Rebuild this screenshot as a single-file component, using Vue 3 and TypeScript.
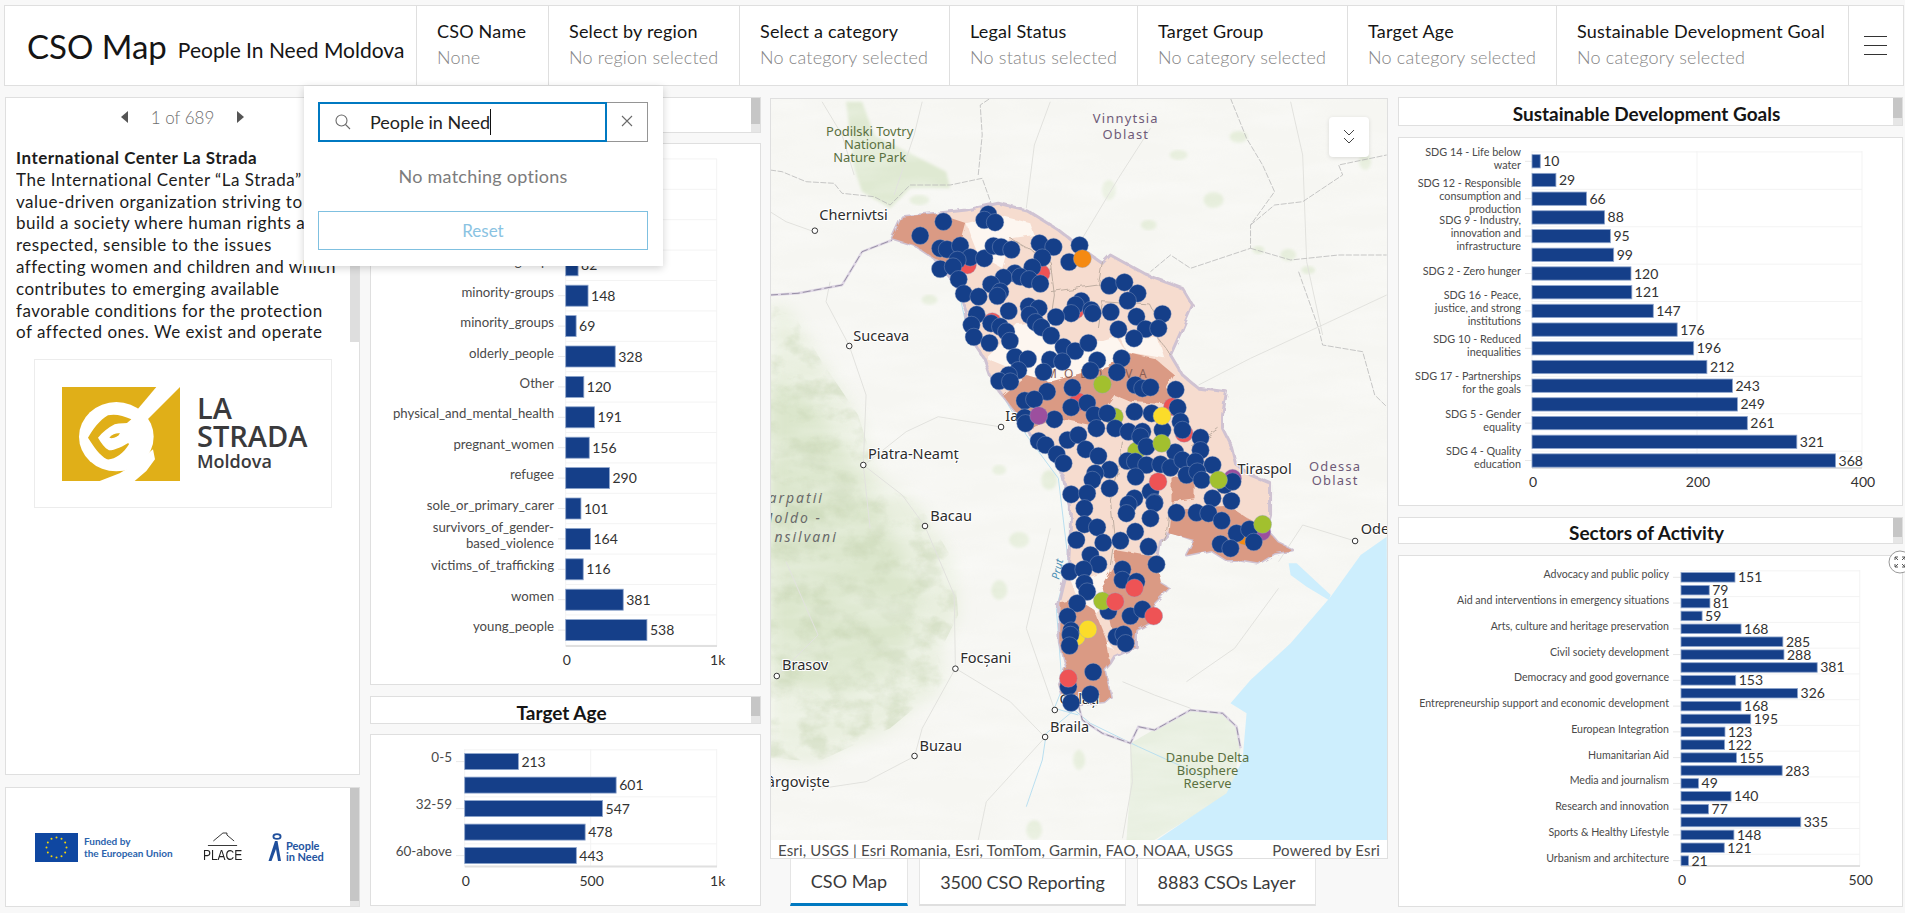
<template>
  <div class="page">
    <header class="topbar">
      <div class="brand">
        <span class="brand-title">CSO Map</span>
        <span class="brand-sub">People In Need Moldova</span>
      </div>
      <div v-for="f in filters" :key="f.label" class="filter" :style="{ width: f.width + 'px' }">
        <div class="filter-label">{{ f.label }}</div>
        <div class="filter-value">{{ f.value }}</div>
      </div>
      <button class="menu-btn" aria-label="Menu"><i></i><i></i><i></i></button>
    </header>

    <div class="dropdown">
      <div class="search-row">
        <div class="search-box">
          <svg class="search-icon" width="18" height="18" viewBox="0 0 18 18" fill="none" stroke="#6a6a6a" stroke-width="1.1">
            <circle cx="7.5" cy="7.5" r="5.5" />
            <path d="M11.5 11.5 L16 16" />
          </svg>
          <span class="search-text">People in Need</span>
          <span class="caret"></span>
        </div>
        <button class="clear-btn" aria-label="Clear">
          <svg width="12" height="12" viewBox="0 0 12 12" stroke="#6a6a6a" stroke-width="1.1"><path d="M1 1 L11 11 M11 1 L1 11" /></svg>
        </button>
      </div>
      <div class="no-match">No matching options</div>
      <button class="reset-btn">Reset</button>
    </div>

    <main class="layout">
      <section class="col col-info">
        <div class="card info-card">
          <div class="pager">
            <svg width="9" height="14" viewBox="0 0 9 14"><path d="M8 1 V13 L1 7 Z" fill="#555" /></svg>
            <span>1 of 689</span>
            <svg width="9" height="14" viewBox="0 0 9 14"><path d="M1 1 V13 L8 7 Z" fill="#555" /></svg>
          </div>
          <div class="info-text">
            <strong>International Center La Strada</strong>
            <span v-for="line in infoLines" :key="line" class="info-line">{{ line }}</span>
          </div>
          <span class="track track-info"></span>
          <div class="logo-box">
            <svg class="strada-mark" width="118" height="94" viewBox="127 113 354 282">
              <rect x="127" y="113" width="354" height="282" fill="#e0af18" />
              <path d="M410 113 H481 L382 212 L350 184 Z" fill="#fff" />
              <ellipse cx="290" cy="262" rx="112" ry="104" fill="#fff" />
              <path d="M240 395 L300 372 L345 345 L400 300 L406 330 L380 365 L345 395 Z" fill="#fff" />
              <path d="M335 210 C310 198 285 193 265 198 C240 212 220 240 205 265 C222 292 240 318 262 330 C285 332 312 312 328 285 L300 240 Z" fill="#e0af18" />
              <path d="M340 220 C320 222 300 220 285 225 C265 235 248 250 235 265 C245 282 255 296 268 303 C285 303 310 292 335 275 L362 240 Z" fill="#fff" />
              <path d="M270 264 C278 254 292 250 301 252 C296 263 282 268 270 266 Z" fill="#e0af18" />
            </svg>
            <div class="strada-name">
              <span class="n-la">LA</span>
              <span class="n-strada">STRADA</span>
              <span class="n-moldova">Moldova</span>
            </div>
          </div>
        </div>
        <div class="card footer-card">
          <svg class="eu-flag" width="43" height="29" viewBox="0 0 43 29">
            <rect width="43" height="29" fill="#0f47a1" />
            <circle v-for="(s, i) in euStars" :key="i" :cx="s.x" :cy="s.y" r="1" fill="#f5d50a" />
          </svg>
          <div class="eu-text">Funded by<br />the European Union</div>
          <div class="place">
            <svg width="37" height="15" viewBox="0 0 37 15" fill="none" stroke="#222" stroke-width="1">
              <path d="M7 9 L19 1 H24 L24 3 L33 9" />
              <path d="M0 13.5 H37" />
            </svg>
            <span>PLACE</span>
          </div>
          <div class="pin">
            <svg width="14" height="29" viewBox="0 0 14 29">
              <ellipse cx="9" cy="3.5" rx="3.6" ry="2.4" fill="none" stroke="#1f4f9c" stroke-width="1.8" />
              <path d="M7 8 L9.5 8 L13 28 L10 28 L8 16 L3.5 28 L0.5 28 Z" fill="#1f4f9c" />
            </svg>
            <span>People<br />in Need</span>
          </div>
          <span class="track track-footer"></span>
        </div>
      </section>

      <section v-for="col in chartColumns" :key="col.cls" :class="['col', col.cls]">
        <template v-for="chart in col.charts" :key="chart.title">
          <div class="panel-head" :style="{ height: chart.headH + 'px', marginBottom: chart.gap + 'px' }">
            <h3 :style="{ lineHeight: chart.headH + 3 + 'px' }">{{ chart.title }}</h3>
            <span class="thumb"></span>
          </div>
          <div class="card chart-card" :style="{ height: chart.h + 'px', marginBottom: '11px' }">
            <svg class="chart" :viewBox="`${chart.x + 1} ${chart.y + 1} ${chart.w - 2} ${chart.h - 2}`">
              <line
                v-for="y in gridYs(chart)"
                :key="y"
                :x1="chart.x0"
                :x2="chart.plotRight"
                :y1="y"
                :y2="y"
                class="grid"
              />
              <line
                v-for="t in chart.ticks"
                :key="'v' + t.v"
                :x1="chart.x0 + t.v * chart.unit"
                :x2="chart.x0 + t.v * chart.unit"
                :y1="chart.plotTop"
                :y2="chart.axisY"
                class="grid"
              />
              <line :x1="chart.x0" :x2="chart.plotRight" :y1="chart.axisY" :y2="chart.axisY" class="axis" />
              <template v-for="(r, i) in chart.rows" :key="i">
                <template v-if="r.label">
                  <line :x1="chart.labelRight + 4" :x2="chart.x0" :y1="rowY(chart, i)" :y2="rowY(chart, i)" class="axis-tick" />
                  <text class="cat" :style="{ fontSize: chart.labelSize + 'px' }" text-anchor="end">
                    <tspan
                      v-for="(line, n) in r.label"
                      :key="n"
                      :x="chart.labelRight"
                      :y="rowY(chart, i) - chart.labelUp - ((r.label.length - 1) * chart.lineH) / 2 + n * chart.lineH + 4"
                    >{{ line }}</tspan>
                  </text>
                </template>
                <template v-if="r.value">
                  <rect
                    class="bar"
                    :x="chart.x0"
                    :y="rowY(chart, i) - chart.barH / 2"
                    :width="r.value * chart.unit"
                    :height="chart.barH"
                  />
                  <text class="val" :x="chart.x0 + r.value * chart.unit + 3" :y="rowY(chart, i) + 5">{{ r.value }}</text>
                </template>
              </template>
              <text
                v-for="t in chart.ticks"
                :key="'t' + t.v"
                class="val"
                text-anchor="middle"
                :x="chart.x0 + t.v * chart.unit + 1"
                :y="chart.axisY + 19"
              >{{ t.text }}</text>
            </svg>
            <svg v-if="chart.expand" class="expand" width="24" height="24" viewBox="0 0 24 24" fill="none" stroke="#555" stroke-width="1">
              <circle cx="12" cy="12" r="11" fill="#fff" stroke="#999" />
              <path d="M7 7 L10 10 M7 7 H10 M7 7 V10 M7 17 L10 14 M7 17 H10 M7 17 V14 M17 7 L14 10 M17 7 H14 M17 7 V10 M17 17 L14 14 M17 17 H14 M17 17 V14" />
            </svg>
          </div>
        </template>
      </section>

      <section class="col col-map">
        <div class="map-frame">
          <svg class="map" viewBox="771 99 618 741" preserveAspectRatio="none">
            <defs>
              <filter id="soft" x="-10%" y="-10%" width="120%" height="120%"><feGaussianBlur stdDeviation="8" /></filter>
              <filter id="softer" x="-10%" y="-10%" width="120%" height="120%"><feGaussianBlur stdDeviation="1.5" /></filter>
              <filter id="rough" x="-5%" y="-5%" width="110%" height="110%">
                <feTurbulence type="fractalNoise" baseFrequency="0.09" numOctaves="2" seed="4" />
                <feDisplacementMap in="SourceGraphic" scale="6" />
              </filter>
              <filter id="hills" x="0" y="0" width="100%" height="100%">
                <feTurbulence type="fractalNoise" baseFrequency="0.012 0.05" numOctaves="3" seed="9" />
                <feColorMatrix values="0 0 0 0 1  0 0 0 0 1  0 0 0 0 1  1.6 0 0 0 -0.55" />
              </filter>
              <filter id="ridge" x="0" y="0" width="100%" height="100%">
                <feTurbulence type="fractalNoise" baseFrequency="0.035 0.05" numOctaves="4" seed="3" />
                <feColorMatrix values="0 0 0 0 0.56  0 0 0 0 0.65  0 0 0 0 0.44  3.2 0 0 0 -1.4" />
              </filter>
              <clipPath id="mountains"><polygon :points="pts(mountainArea)" /></clipPath>
            </defs>

            <rect x="771" y="99" width="618" height="741" fill="#f6f6f2" />
            <polygon :points="pts(mountainArea)" fill="#e9efdf" filter="url(#soft)" />
            <polygon :points="pts(forestCore)" fill="#dbe6cc" filter="url(#soft)" />
            <g clip-path="url(#mountains)"><rect x="771" y="99" width="618" height="741" filter="url(#ridge)" opacity="0.5" /></g>
            <polygon :points="pts(tovtry)" fill="#dfe9d2" filter="url(#softer)" />
            <ellipse v-for="(g, i) in patches" :key="'p' + i" :cx="g[0]" :cy="g[1]" :rx="g[2]" :ry="g[3]" fill="#e5edda" filter="url(#softer)" />
            <polygon :points="pts(delta)" fill="#e8efe0" />
            <rect x="771" y="99" width="618" height="741" filter="url(#hills)" opacity="0.35" />
            <polygon :points="pts(sea)" fill="#cdeefd" />
            <polygon :points="pts(liman)" fill="#cdeefd" />
            <polyline v-for="(l, i) in roads" :key="'r' + i" :points="pts(l)" class="road" />
            <polyline :points="pts(prut)" class="river" />
            <polyline :points="pts(danube)" class="river" />
            <polyline v-for="(l, i) in oblasts" :key="'o' + i" :points="pts(l)" class="oblast" />
            <polyline v-for="(l, i) in borders" :key="'b' + i" :points="pts(l)" class="border-halo" />
            <polyline v-for="(l, i) in borders" :key="'bd' + i" :points="pts(l)" class="border-dash" />

            <g filter="url(#rough)">
              <polygon :points="pts(moldova)" fill="#f6dccf" stroke="#cfc2d2" stroke-width="3" stroke-linejoin="round" />
              <polygon v-for="(p, i) in paleRegions" :key="'pa' + i" :points="pts(p)" fill="#fdf6f0" />
              <polygon v-for="(p, i) in darkRegions" :key="'da' + i" :points="pts(p)" fill="#da9a84" />
              <polyline v-for="(l, i) in regionLines" :key="'li' + i" :points="pts(l)" class="region-line" />
            </g>

            <g class="city-dots">
              <circle v-for="c in cityDots" :key="'d' + c.name" :cx="c.dx" :cy="c.dy" r="2.8" />
            </g>
            <text v-for="c in cities" :key="c.name" class="city" :x="c.x" :y="c.y" :text-anchor="c.anchor || 'start'">{{ c.name }}</text>
            <text class="country" x="1047" y="378">MOLDOVA</text>
            <text class="river-name" transform="translate(1060 580) rotate(-78)">Prut</text>
            <text class="oblast-name" text-anchor="middle"><tspan x="1127" y="123">Vinnytsia</tspan><tspan x="1127" y="139">Oblast</tspan></text>
            <text class="oblast-name" text-anchor="middle"><tspan x="1337" y="471">Odessa</tspan><tspan x="1337" y="485">Oblast</tspan></text>
            <text class="park" text-anchor="middle"><tspan x="870" y="136">Podilski Tovtry</tspan><tspan x="870" y="149">National</tspan><tspan x="870" y="162">Nature Park</tspan></text>
            <text class="park" text-anchor="middle"><tspan x="1209" y="762">Danube Delta</tspan><tspan x="1209" y="775">Biosphere</tspan><tspan x="1209" y="788">Reserve</tspan></text>
            <text class="range" text-anchor="end"><tspan x="824" y="503">arpatii</tspan><tspan x="822" y="523">Moldo -</tspan><tspan x="838" y="542">nsilvani</tspan></text>

            <circle v-for="(d, i) in underDots" :key="'u' + i" :cx="d.x" :cy="d.y" r="9" :fill="d.c" class="dot" />
            <circle v-for="(d, i) in navyDots" :key="'n' + i" :cx="d.x" :cy="d.y" r="8.8" fill="#153f89" class="dot" />
            <circle v-for="(d, i) in topDots" :key="'t' + i" :cx="d.x" :cy="d.y" r="9" :fill="d.c" class="dot" />
          </svg>
          <button class="collapse-btn" aria-label="Collapse">
            <svg width="12" height="16" viewBox="0 0 12 16" fill="none" stroke="#444" stroke-width="1"><path d="M1 1 L6 6 L11 1 M1 9 L6 14 L11 9" /></svg>
          </button>
          <div class="attribution">
            <span>Esri, USGS | Esri Romania, Esri, TomTom, Garmin, FAO, NOAA, USGS</span>
            <span>Powered by Esri</span>
          </div>
        </div>
        <nav class="tabs">
          <a class="tab active">CSO Map</a>
          <a class="tab">3500 CSO Reporting</a>
          <a class="tab">8883 CSOs Layer</a>
        </nav>
      </section>
    </main>
  </div>
</template>

<script setup lang="ts">
type Pt = number[]

interface Row {
  label?: string[]
  value: number
}

interface Chart {
  title: string
  headH: number
  gap: number
  x: number
  y: number
  w: number
  h: number
  x0: number
  unit: number
  firstY: number
  step: number
  barH: number
  axisY: number
  plotTop: number
  plotRight: number
  labelRight: number
  labelSize: number
  labelUp: number
  lineH: number
  gridEvery: number
  ticks: { v: number; text: string }[]
  rows: Row[]
  expand?: boolean
}

const filters = [
  { label: 'CSO Name', value: 'None', width: 132 },
  { label: 'Select by region', value: 'No region selected', width: 191 },
  { label: 'Select a category', value: 'No category selected', width: 210 },
  { label: 'Legal Status', value: 'No status selected', width: 188 },
  { label: 'Target Group', value: 'No category selected', width: 210 },
  { label: 'Target Age', value: 'No category selected', width: 209 },
  { label: 'Sustainable Development Goal', value: 'No category selected', width: 292 }
]

const infoLines = [
  'The International Center “La Strada” is a',
  'value-driven organization striving to',
  'build a society where human rights are',
  'respected, sensible to the issues',
  'affecting women and children and which',
  'contributes to emerging available',
  'favorable conditions for the protection',
  'of affected ones. We exist and operate'
]

const euStars = Array.from({ length: 12 }, (_, i) => ({
  x: 21.5 + 10 * Math.sin((i * Math.PI) / 6),
  y: 14.5 - 10 * Math.cos((i * Math.PI) / 6)
}))

const num = (values: number[]): Row[] => values.map((value) => ({ value }))

const sdgRows: Row[] = num([10, 29, 66, 88, 95, 99, 120, 121, 147, 176, 196, 212, 243, 249, 261, 321, 368])
const sdgLabels: Record<number, string[]> = {
  0: ['SDG 14 - Life below', 'water'],
  2: ['SDG 12 - Responsible', 'consumption and', 'production'],
  4: ['SDG 9 - Industry,', 'innovation and', 'infrastructure'],
  6: ['SDG 2 - Zero hunger'],
  8: ['SDG 16 - Peace,', 'justice, and strong', 'institutions'],
  10: ['SDG 10 - Reduced', 'inequalities'],
  12: ['SDG 17 - Partnerships', 'for the goals'],
  14: ['SDG 5 - Gender', 'equality'],
  16: ['SDG 4 - Quality', 'education']
}
sdgRows.forEach((r, i) => (r.label = sdgLabels[i]))

const sectorRows: Row[] = num([151, 79, 81, 59, 168, 285, 288, 381, 153, 326, 168, 195, 123, 122, 155, 283, 49, 140, 77, 335, 148, 121, 21])
;[
  'Advocacy and public policy',
  'Aid and interventions in emergency situations',
  'Arts, culture and heritage preservation',
  'Civil society development',
  'Democracy and good governance',
  'Entrepreneurship support and economic development',
  'European Integration',
  'Humanitarian Aid',
  'Media and journalism',
  'Research and innovation',
  'Sports & Healthy Lifestyle',
  'Urbanism and architecture'
].forEach((t, i) => (sectorRows[i * 2].label = [t]))

const groupChart: Chart = {
  title: 'Target Group', headH: 36, gap: 10, x: 370, y: 143, w: 391, h: 542,
  x0: 565.7, unit: 0.151, firstY: 174.1, step: 30.4, barH: 21, axisY: 646, plotTop: 159, plotRight: 717,
  labelRight: 554, labelSize: 13.2, labelUp: 3, lineH: 15.5, gridEvery: 1,
  ticks: [{ v: 0, text: '0' }, { v: 1000, text: '1k' }],
  rows: [
    { value: 0 }, { value: 0 }, { value: 0 },
    { label: ['ethnic-groups'], value: 82 },
    { label: ['minority-groups'], value: 148 },
    { label: ['minority_groups'], value: 69 },
    { label: ['olderly_people'], value: 328 },
    { label: ['Other'], value: 120 },
    { label: ['physical_and_mental_health'], value: 191 },
    { label: ['pregnant_women'], value: 156 },
    { label: ['refugee'], value: 290 },
    { label: ['sole_or_primary_carer'], value: 101 },
    { label: ['survivors_of_gender-', 'based_violence'], value: 164 },
    { label: ['victims_of_trafficking'], value: 116 },
    { label: ['women'], value: 381 },
    { label: ['young_people'], value: 538 }
  ]
}

const ageChart: Chart = {
  title: 'Target Age', headH: 28, gap: 10, x: 370, y: 734, w: 391, h: 172,
  x0: 464.7, unit: 0.252, firstY: 761.6, step: 23.5, barH: 16, axisY: 866.5, plotTop: 749, plotRight: 717,
  labelRight: 452, labelSize: 13.5, labelUp: 4, lineH: 15, gridEvery: 2,
  ticks: [{ v: 0, text: '0' }, { v: 500, text: '500' }, { v: 1000, text: '1k' }],
  rows: [
    { label: ['0-5'], value: 213 },
    { value: 601 },
    { label: ['32-59'], value: 547 },
    { value: 478 },
    { label: ['60-above'], value: 443 }
  ]
}

const sdgChart: Chart = {
  title: 'Sustainable Development Goals', headH: 29, gap: 11, x: 1399, y: 137, w: 505, h: 369,
  x0: 1533, unit: 0.825, firstY: 161.3, step: 18.7, barH: 13.3, axisY: 468, plotTop: 151, plotRight: 1863,
  labelRight: 1522, labelSize: 10.8, labelUp: 3, lineH: 13, gridEvery: 2,
  ticks: [{ v: 0, text: '0' }, { v: 200, text: '200' }, { v: 400, text: '400' }],
  rows: sdgRows
}

const sectorChart: Chart = {
  title: 'Sectors of Activity', headH: 27, gap: 11, x: 1399, y: 555, w: 505, h: 352,
  x0: 1682, unit: 0.3575, firstY: 577.3, step: 12.88, barH: 9.5, axisY: 866, plotTop: 570, plotRight: 1861,
  labelRight: 1670, labelSize: 10.6, labelUp: 3, lineH: 13, gridEvery: 2,
  ticks: [{ v: 0, text: '0' }, { v: 500, text: '500' }],
  rows: sectorRows,
  expand: true
}

const chartColumns = [
  { cls: 'col-mid', charts: [groupChart, ageChart] },
  { cls: 'col-right', charts: [sdgChart, sectorChart] }
]

const rowY = (c: Chart, i: number) => c.firstY + i * c.step

const gridYs = (c: Chart) => {
  const out: number[] = []
  for (let i = 0; i <= c.rows.length; i += c.gridEvery) {
    out.push(rowY(c, i) - c.step / 2)
  }
  return out
}

// Map shapes are traced in the crop coordinates of the map and then converted
const toPage = ([x, y]: Pt) => [770 + x / 2.489, 95 + y / 3]
const pts = (list: Pt[]) =>
  list
    .map((p) => {
      const [x, y] = toPage(p)
      return `${x.toFixed(1)},${y.toFixed(1)}`
    })
    .join(' ')
// second crop starts 405px lower
const low = (list: Pt[]): Pt[] => list.map(([x, y]) => [x, y + 1215])

const moldova: Pt[] = [
  [305, 430], [330, 365], [415, 355], [490, 345], [570, 325], [640, 345], [720, 405], [790, 470], [830, 505], [850, 480],
  [940, 540], [1030, 580], [1055, 630], [1030, 700], [1000, 780], [1030, 840], [1070, 880], [1140, 890], [1130, 960],
  [1130, 1000], [1155, 1060], [1165, 1110], [1200, 1140], [1250, 1165], [1250, 1260],
  ...low([
    [1240, 90], [1270, 130], [1305, 150], [1260, 160], [1220, 190], [1170, 180], [1140, 180], [1100, 150], [1040, 165],
    [1060, 120], [1000, 95], [975, 125], [960, 240], [995, 265], [950, 320], [975, 350], [915, 390], [915, 440], [860, 470],
    [850, 490], [835, 510], [850, 590], [835, 605], [770, 615], [730, 590], [720, 550], [740, 500], [725, 430], [720, 320],
    [745, 200], [750, 100], [750, 20]
  ]),
  [730, 1140], [700, 1060], [650, 1020], [620, 960], [580, 900], [555, 860], [535, 790], [495, 720], [490, 650], [465, 570],
  [410, 490], [360, 450]
]

const darkRegions: Pt[][] = [
  [[305, 430], [330, 365], [415, 355], [490, 385], [480, 430], [500, 500], [480, 525], [410, 490], [360, 450]],
  [[580, 900], [640, 840], [700, 860], [880, 800], [890, 770], [960, 790], [1010, 840], [990, 880], [1010, 930], [900, 920], [860, 900], [830, 950], [800, 990], [720, 970], [650, 1000], [620, 960]],
  [[1000, 1140], [1060, 1160], [1060, 1210], [1000, 1220]],
  low([[1000, 30], [1150, 20], [1200, 60], [1240, 90], [1270, 130], [1305, 150], [1260, 160], [1220, 190], [1170, 180], [1140, 180], [1100, 150], [1040, 165], [1060, 120], [995, 100]]),
  low([[860, 150], [960, 170], [975, 250], [995, 265], [950, 320], [975, 350], [915, 390], [910, 440], [860, 430], [830, 260], [860, 200]]),
  low([[725, 310], [770, 300], [810, 330], [840, 420], [850, 490], [835, 510], [850, 590], [835, 605], [770, 615], [730, 590], [720, 550], [740, 500], [725, 430]])
]

const paleRegions: Pt[][] = [
  [[490, 385], [570, 360], [650, 385], [660, 420], [600, 430], [580, 520], [520, 480], [500, 420]],
  [[620, 690], [700, 680], [720, 770], [860, 720], [890, 770], [880, 800], [700, 860], [640, 840], [540, 790]],
  [[870, 720], [970, 730], [985, 790], [890, 770]],
  low([[800, 230], [850, 210], [840, 270], [815, 350], [840, 420], [860, 450], [815, 430], [810, 330], [770, 300], [745, 230]])
]

const regionLines: Pt[][] = [
  [[600, 430], [700, 500], [710, 600], [700, 680]],
  [[700, 590], [820, 570], [830, 500]],
  [[820, 700], [830, 620], [950, 630], [975, 690]],
  [[970, 730], [1000, 780]],
  [[880, 1040], [870, 1130], [850, 1215], [860, 1330], [850, 1410]],
  [[1000, 1220], [990, 1310], [980, 1340]],
  [[1120, 1000], [1050, 1060]]
]

const mountainArea: Pt[] = [
  [0, 610], [60, 660], [130, 800], [220, 960], [270, 1150], [380, 1240], [460, 1400], [470, 1560], [420, 1680], [440, 1760], [300, 1900], [120, 2000], [0, 1990]
]
const forestCore: Pt[] = [
  [0, 850], [100, 900], [200, 1100], [300, 1300], [380, 1500], [330, 1700], [200, 1800], [60, 1780], [0, 1700]
]
const tovtry: Pt[] = [
  [190, 20], [230, 20], [260, 120], [440, 230], [450, 280], [350, 280], [300, 340], [230, 290], [210, 220], [200, 120]
]
const delta: Pt[] = low([
  [900, 730], [1000, 660], [1050, 630], [1130, 640], [1165, 680], [1175, 745], [1150, 880], [1040, 960], [960, 1020], [890, 1020], [900, 850]
])
const sea: Pt[] = low([
  [1540, 110], [1475, 165], [1400, 290], [1300, 430], [1200, 540], [1150, 610], [1190, 640], [1180, 780], [1140, 880], [1040, 960], [965, 1021], [1545, 1021]
])
const liman: Pt[] = low([
  [1295, 190], [1315, 190], [1400, 285], [1395, 300], [1340, 260], [1300, 225]
])

const borders: Pt[][] = [
  [[0, 600], [70, 595], [180, 570], [205, 520], [230, 470], [305, 435]],
  low([[770, 615], [780, 660], [830, 700], [900, 730], [920, 680], [960, 690], [1050, 630], [1130, 640], [1165, 680], [1175, 745]])
]

const oblasts: Pt[][] = [
  [[555, 335], [530, 250], [450, 270], [350, 270], [300, 330], [260, 305], [180, 295], [160, 265], [90, 260], [30, 230], [0, 225]],
  [[520, 240], [530, 120], [525, 30], [550, 10]],
  [[1150, 10], [1190, 130], [1230, 210], [1260, 290], [1200, 390], [1200, 460], [1050, 520], [1000, 480], [950, 530]],
  [[1200, 460], [1300, 495], [1420, 480], [1540, 480]],
  [[1320, 530], [1370, 700], [1380, 750], [1480, 770], [1510, 900], [1540, 935]],
  [[1200, 390], [1260, 330], [1330, 320], [1430, 240], [1420, 210], [1540, 180]]
]

const roads: Pt[][] = [
  [[110, 410], [40, 380], [0, 350]],
  [[130, 20], [180, 120], [210, 240]],
  [[380, 20], [360, 120], [310, 300]],
  [[700, 20], [660, 150], [640, 340]],
  [[950, 100], [870, 250], [780, 430]],
  [[1300, 20], [1330, 180], [1340, 500], [1380, 720]],
  [[1540, 600], [1380, 690], [1200, 790], [1070, 870]],
  [[198, 753], [140, 620], [150, 560]],
  [[198, 753], [240, 900], [233, 1110], [250, 1300]],
  [[577, 996], [420, 965], [340, 1010], [235, 1110]],
  [[233, 1110], [330, 1200], [387, 1294]],
  [[387, 1294], [460, 1500], [463, 1720]],
  [[463, 1720], [380, 1900], [361, 1984]],
  [[361, 1984], [240, 2060], [130, 2080]],
  [[687, 1927], [600, 1820], [463, 1720]],
  [[711, 1846], [640, 1600], [700, 1300]],
  [[687, 1927], [540, 2120], [520, 2235]],
  [[900, 1945], [905, 2060], [880, 2230]],
  [[1050, 1840], [960, 1800], [880, 1760]],
  [[1270, 1480], [1160, 1660], [1040, 1760]],
  [[1461, 1338], [1330, 1290], [1270, 1400]],
  [[17, 1743], [120, 1620], [40, 1400]]
]

const prut: Pt[] = [
  [420, 490], [470, 580], [495, 720], [540, 800], [580, 900], [640, 1020], [720, 1150], [745, 1400], [715, 1540], [730, 1780], [710, 1840], [770, 1860]
]
const danube: Pt[] = low([[640, 920], [680, 780], [690, 700], [760, 630], [800, 670], [920, 740], [1030, 800], [1110, 850]])

const patches: number[][] = [
  [1180, 155, 9, 5], [1110, 190, 7, 10], [1240, 137, 9, 6], [1215, 200, 10, 8], [1150, 225, 8, 5],
  [1290, 255, 8, 6], [1367, 162, 6, 8], [1310, 270, 7, 4], [1090, 300, 8, 4], [1260, 250, 6, 4],
  [1050, 480, 8, 10], [1000, 470, 7, 5], [975, 240, 14, 6], [920, 200, 10, 5], [1015, 240, 6, 4],
  [1035, 830, 8, 10], [1080, 760, 6, 10], [1020, 540, 10, 8], [1000, 590, 8, 10], [930, 300, 8, 5]
]

const cities: { name: string; x: number; y: number; dx?: number; dy?: number; anchor?: string }[] = [
  { name: 'Chernivtsi', x: 819.5, y: 220, dx: 815, dy: 230.7 },
  { name: 'Suceava', x: 853.6, y: 340.7, dx: 849.5, dy: 346 },
  { name: 'Iași', x: 1006, y: 421, dx: 1001.8, dy: 427 },
  { name: 'Piatra-Neamț', x: 868.4, y: 459, dx: 863.6, dy: 465 },
  { name: 'Bacau', x: 930.7, y: 520.7, dx: 925.5, dy: 526 },
  { name: 'Focșani', x: 960.8, y: 663, dx: 956, dy: 668.7 },
  { name: 'Brasov', x: 782, y: 670, dx: 776.8, dy: 676 },
  { name: 'Buzau', x: 920, y: 750.7, dx: 915, dy: 756 },
  { name: 'Braila', x: 1051, y: 731.7, dx: 1046, dy: 737 },
  { name: 'Galați', x: 1060.5, y: 704, dx: 1055.7, dy: 710 },
  { name: 'Târgoviște', x: 830, y: 787, anchor: 'end' },
  { name: 'Odesa', x: 1362.6, y: 534, dx: 1357, dy: 541 },
  { name: 'Tiraspol', x: 1239, y: 474 }
]
const cityDots = cities.filter((c) => c.dx)

const dots = (list: Pt[]) => list.map(toPage).map(([x, y]) => ({ x, y }))
const colored = (c: string, list: Pt[]) => dots(list).map((d) => ({ ...d, c }))

const RED = '#ee5355'
const GREEN = '#a2c02e'
const PURPLE = '#9c4f9e'
const ORANGE = '#f58a12'
const YELLOW = '#fbdc2a'

const underDots = [
  ...colored(RED, [[493, 510], [677, 535], [763, 645], [770, 920], [1005, 935], [555, 680]]),
  ...colored(GREEN, [[860, 965], [915, 1068]]),
  ...colored(YELLOW, low([[765, 410]])),
  ...colored(ORANGE, low([[1185, 108]])),
  ...colored(PURPLE, [[1155, 1150], ...low([[1228, 95]])]),
  ...colored(RED, [[1034, 1015]])
]

const navyDots = dots([
  [433, 380], [375, 422], [545, 358], [535, 375], [562, 382], [425, 460], [442, 463], [475, 452], [500, 487], [535, 490],
  [468, 495], [425, 522], [457, 515], [471, 553], [484, 596], [521, 605], [558, 453], [577, 456], [603, 464], [673, 445],
  [708, 456], [773, 451], [680, 488], [747, 501], [655, 517], [611, 535], [583, 548], [625, 545], [647, 553], [675, 566],
  [552, 568], [575, 590], [568, 603], [847, 572], [885, 562], [918, 595], [893, 617], [980, 657], [777, 618], [763, 630],
  [752, 655], [802, 645], [806, 655], [851, 651], [915, 665], [596, 648], [646, 634], [671, 640], [648, 660], [663, 682],
  [678, 697], [714, 666], [702, 722], [516, 659], [503, 690], [509, 726], [552, 685], [575, 695], [590, 710], [599, 738],
  [548, 744], [870, 703], [938, 702], [970, 700], [909, 730], [733, 756], [762, 768], [795, 744], [612, 786], [644, 792],
  [699, 794], [730, 800], [817, 796], [878, 790], [800, 827], [866, 832], [683, 831], [620, 826], [596, 840], [572, 858],
  [600, 860], [692, 890], [755, 878], [912, 870], [930, 880], [950, 877], [1013, 884], [636, 917], [660, 913], [752, 937],
  [792, 924], [810, 960], [842, 955], [910, 950], [953, 955], [1018, 938], [636, 968], [638, 985], [710, 973], [815, 1000],
  [862, 1000], [895, 1010], [930, 1010], [980, 1005], [1025, 980], [1030, 1005], [743, 1035], [770, 1020], [671, 1038],
  [688, 1050], [716, 1078], [733, 1105], [788, 1063], [820, 1083], [925, 1025], [940, 1055], [1012, 1072], [1075, 1028],
  [1075, 1066], [892, 1098], [912, 1100], [940, 1110], [975, 1108], [1000, 1118], [1030, 1095], [1062, 1100], [1105, 1110],
  [1040, 1140], [1067, 1130], [1078, 1155], [848, 1124], [812, 1135], [805, 1155], [913, 1145], [848, 1180], [950, 1190],
  [752, 1198], [792, 1195], [910, 1210], [895, 1228], [960, 1222], [1105, 1210], [1152, 1218], [1135, 1170], [1155, 1160],
  ...low([
    [785, 25], [890, 40], [960, 10], [1015, 38], [1065, 38], [1095, 40], [1128, 62], [1165, 100], [1197, 88], [785, 73],
    [817, 82], [912, 95], [950, 55], [765, 120], [875, 122], [945, 140], [832, 128], [800, 165], [820, 193], [1125, 132],
    [1150, 145], [1208, 126], [748, 215], [783, 208], [965, 193], [880, 208], [880, 240], [915, 245], [785, 250], [792, 275],
    [767, 310], [845, 333], [900, 348], [930, 328], [743, 350], [752, 392], [750, 405], [748, 437], [865, 410], [883, 403],
    [888, 430], [807, 516], [745, 560], [800, 583], [752, 608]
  ])
])

const topDots = [
  ...colored(ORANGE, [[780, 491]]),
  ...colored(GREEN, [[830, 868], [978, 1045], [1120, 1155]]),
  ...colored(PURPLE, [[671, 962]]),
  ...colored(YELLOW, [[979, 963]]),
  ...colored(RED, [[969, 1160]]),
  ...colored(GREEN, low([[1230, 73], [830, 303]])),
  ...colored(RED, low([[910, 264], [862, 305], [958, 348], [745, 535]])),
  ...colored(YELLOW, low([[794, 388]]))
]
</script>

<style>
html,
body {
  margin: 0;
  overflow: hidden;
  background: #f8f8f8;
}
</style>

<style scoped>
.page {
  position: relative;
  width: 1905px;
  height: 913px;
  overflow: hidden;
  background: #f8f8f8;
  font-family: Lato, "Open Sans", sans-serif;
  color: #151515;
  box-sizing: border-box;
  padding-top: 5px;
}

.topbar {
  display: flex;
  height: 81px;
  margin: 0 1px 0 4px;
  background: #fff;
  border: 1px solid #dfdfdf;
  box-sizing: border-box;
}

.brand {
  width: 412px;
  flex: none;
  display: flex;
  align-items: center;
  gap: 11px;
  padding-left: 22px;
  box-sizing: border-box;
  border-right: 1px solid #dfdfdf;
  white-space: nowrap;
}

.brand-title {
  font-size: 33px;
  font-weight: 400;
}

.brand-sub {
  font-size: 21px;
  padding-top: 8px;
}

.filter {
  flex: none;
  box-sizing: border-box;
  padding: 13px 0 0 20px;
  border-right: 1px solid #dfdfdf;
  white-space: nowrap;
}

.filter-label {
  font-size: 18px;
  line-height: 24px;
  letter-spacing: 0.2px;
}

.filter-value {
  margin-top: 3px;
  font-size: 18px;
  line-height: 22px;
  letter-spacing: 0.2px;
  color: #858585;
  font-weight: 300;
}

.menu-btn {
  flex: 1;
  display: flex;
  flex-direction: column;
  gap: 7.5px;
  align-items: flex-start;
  justify-content: center;
  padding: 0 0 0 15px;
  border: none;
  background: none;
}

.menu-btn i {
  display: block;
  width: 23px;
  height: 1.5px;
  background: #333;
}

.dropdown {
  position: absolute;
  left: 304px;
  top: 86px;
  width: 359px;
  height: 180px;
  z-index: 5;
  box-sizing: border-box;
  padding: 16px 15px 0 14px;
  background: #fff;
  box-shadow: 0 2px 8px rgba(0, 0, 0, 0.18);
}

.search-row {
  display: flex;
  height: 40px;
}

.search-box {
  width: 289px;
  box-sizing: border-box;
  display: flex;
  align-items: center;
  border: 2px solid #0079c1;
  padding-left: 14px;
}

.search-text {
  margin-left: 18px;
  font-size: 18px;
  color: #222;
}

.caret {
  width: 1px;
  height: 26px;
  background: #111;
}

.clear-btn {
  flex: 1;
  background: #fff;
  border: 1px solid #959595;
  border-left: none;
  padding: 0;
}

.no-match {
  margin-top: 19px;
  text-align: center;
  font-size: 18px;
  letter-spacing: 0.25px;
  line-height: 30px;
  color: #7c7c7c;
}

.reset-btn {
  display: block;
  width: 100%;
  height: 39px;
  margin-top: 20px;
  background: #fff;
  border: 1px solid #7fc0e0;
  color: #8ac3e2;
  font: inherit;
  font-size: 17px;
}

.layout {
  display: grid;
  grid-template-columns: 354px 391px 618px 505px;
  column-gap: 10px;
  margin: 11px 0 0 5px;
}

.col {
  grid-row: 1;
  min-width: 0;
}

.col-info { grid-column: 1; margin-right: -1px; }
.col-mid { grid-column: 2; margin-left: 1px; margin-right: -1px; }
.col-map { grid-column: 3; }
.col-right { grid-column: 4; }

.card {
  position: relative;
  background: #fff;
  border: 1px solid #dfdfdf;
  box-sizing: border-box;
}

.info-card {
  height: 678px;
  padding: 0 10px;
}

.pager {
  display: flex;
  align-items: center;
  justify-content: center;
  gap: 22px;
  height: 38px;
  font-size: 17px;
  color: #6e6e6e;
  font-weight: 300;
}

.info-text {
  height: 195px;
  margin-top: 11px;
  overflow: hidden;
  font-size: 17px;
  letter-spacing: 0.5px;
  line-height: 21.8px;
  color: #1c1c1c;
  white-space: nowrap;
}

.info-text strong {
  font-weight: 700;
  display: block;
}

.info-line {
  display: block;
}

.track {
  position: absolute;
  right: 0;
  width: 9px;
}

.track-info {
  top: 0;
  height: 244px;
  background: #dedede;
}

.logo-box {
  display: flex;
  align-items: center;
  gap: 17px;
  margin: 17px 0 0 18px;
  width: 298px;
  height: 149px;
  box-sizing: border-box;
  border: 1px solid #ececec;
  padding-left: 27px;
}

.strada-name {
  display: flex;
  flex-direction: column;
  font-family: "Open Sans", sans-serif;
  font-weight: 600;
  color: #3a3a3c;
  line-height: 1;
}

.n-la { font-size: 29px; line-height: 28px; }
.n-strada { font-size: 29px; line-height: 27px; }
.n-moldova { font-size: 18px; line-height: 24px; }

.footer-card {
  display: flex;
  align-items: center;
  height: 120px;
  margin-top: 12px;
  padding-left: 29px;
}

.eu-flag { flex: none; }

.eu-text {
  margin-left: 6px;
  font-size: 10px;
  line-height: 12px;
  font-weight: 700;
  color: #2b63ad;
  white-space: nowrap;
}

.place {
  margin-left: 25px;
  display: flex;
  flex-direction: column;
  align-items: center;
  font-family: "Liberation Sans", sans-serif;
  font-size: 15px;
  line-height: 15px;
  color: #222;
  transform: scaleX(0.8);
}

.pin {
  margin-left: 21px;
  display: flex;
  align-items: flex-end;
  gap: 4px;
  font-size: 11px;
  line-height: 11px;
  font-weight: 700;
  color: #24549f;
}

.track-footer {
  top: 0;
  bottom: 0;
  background: linear-gradient(#c6c6c6 96%, #e6e6e6 96%);
}

.panel-head {
  position: relative;
  background: #fff;
  border: 1px solid #dfdfdf;
  box-sizing: border-box;
  overflow: hidden;
}

.panel-head h3 {
  margin: 0;
  text-align: center;
  font-size: 19px;
  font-weight: 700;
  padding-right: 8px;
  color: #151515;
}

.thumb {
  position: absolute;
  top: 0;
  right: 0;
  bottom: 0;
  width: 9px;
  background: linear-gradient(#c6c6c6 75%, #e6e6e6 75%);
}

.chart {
  display: block;
  width: 100%;
  height: 100%;
}

.grid {
  stroke: #f3f3f3;
  stroke-width: 1;
}

.axis {
  stroke: #e0e0e0;
  stroke-width: 2;
}

.axis-tick {
  stroke: #e8e8e8;
  stroke-width: 1;
}

.bar {
  fill: #153f89;
  stroke: #8ea5cc;
  stroke-width: 0.8;
}

.cat {
  fill: #4a4a4a;
  font-family: Lato, sans-serif;
}

.val {
  fill: #323232;
  font-family: Lato, sans-serif;
  font-size: 14px;
}

.expand {
  position: absolute;
  left: 489px;
  top: -6px;
}

.map-frame {
  position: relative;
  height: 761px;
  margin-top: 1px;
  background: #fff;
  border: 1px solid #dfdfdf;
  box-sizing: border-box;
  overflow: hidden;
}

.map {
  display: block;
  width: 100%;
  height: 741px;
}

.road {
  fill: none;
  stroke: #e2e2de;
  stroke-width: 1;
}

.river {
  fill: none;
  stroke: #b9dff0;
  stroke-width: 1;
}

.oblast {
  fill: none;
  stroke: #b9b9b9;
  stroke-width: 0.8;
  stroke-dasharray: 6 1.5;
}

.border-halo {
  fill: none;
  stroke: #ded6e4;
  stroke-width: 2.5;
}

.border-dash {
  fill: none;
  stroke: #857e96;
  stroke-width: 0.8;
  stroke-dasharray: 8 3;
}

.region-line {
  fill: none;
  stroke: #b9a89c;
  stroke-width: 0.9;
}

.city-dots circle {
  fill: #fff;
  stroke: #333;
  stroke-width: 1;
}

.city {
  font-family: "Noto Sans", sans-serif;
  font-size: 14.6px;
  fill: #2c2c2c;
  paint-order: stroke;
  stroke: #fff;
  stroke-width: 2px;
}

.country {
  font-family: "Noto Sans", sans-serif;
  font-size: 12px;
  letter-spacing: 7px;
  fill: #8b5f55;
}

.river-name {
  font-family: "Noto Sans", sans-serif;
  font-style: italic;
  font-size: 11px;
  fill: #4a8fb5;
}

.oblast-name {
  font-family: "Noto Sans", sans-serif;
  font-size: 13px;
  letter-spacing: 1.2px;
  fill: #6e5a78;
}

.park {
  font-family: "Noto Sans", sans-serif;
  font-size: 13px;
  fill: #5a7040;
}

.range {
  font-family: "Noto Sans", sans-serif;
  font-style: italic;
  font-size: 14px;
  letter-spacing: 2px;
  fill: #6a6a6a;
}

.dot {
  stroke: rgba(150, 165, 200, 0.55);
  stroke-width: 0.7;
}

.collapse-btn {
  position: absolute;
  left: 558px;
  top: 18px;
  width: 40px;
  height: 40px;
  display: flex;
  align-items: center;
  justify-content: center;
  background: #fff;
  border: none;
  border-radius: 4px;
  box-shadow: 0 1px 4px rgba(0, 0, 0, 0.12);
  padding: 0;
}

.attribution {
  display: flex;
  justify-content: space-between;
  height: 19px;
  align-items: center;
  padding: 0 7px;
  background: #fff;
  font-size: 15px;
  letter-spacing: 0.15px;
  color: #4b4b4b;
  white-space: nowrap;
}

.tabs {
  display: flex;
  gap: 11px;
  padding-left: 20px;
  height: 47px;
}

.tab {
  display: flex;
  align-items: center;
  justify-content: center;
  box-sizing: border-box;
  background: #fff;
  border: 1px solid #e5e5e5;
  border-top: none;
  border-bottom: 2px solid #dfdfdf;
  font-size: 18px;
  color: #3a3a3a;
}

.tab:nth-child(1) { width: 118px; border-bottom: 3px solid #0079c1; }
.tab:nth-child(2) { width: 207px; }
.tab:nth-child(3) { width: 179px; }
</style>
